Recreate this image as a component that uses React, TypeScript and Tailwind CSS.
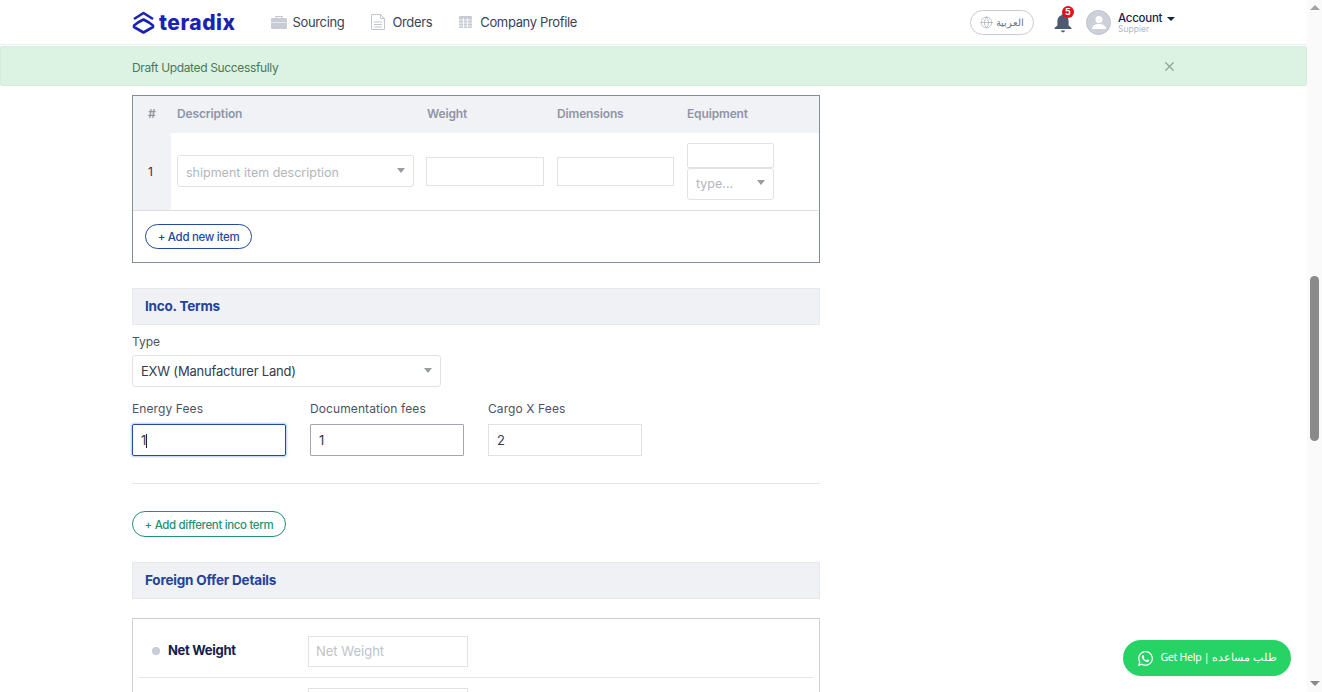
import React from 'react';
import { Globe, X } from 'lucide-react';
import { FaWhatsapp } from 'react-icons/fa';

const font = "font-['Inter','Noto_Sans',sans-serif]";

const Caret = ({ className = '' }: { className?: string }) => (
  <span className={`w-0 h-0 border-x-[4px] border-x-transparent border-t-[5px] border-t-[#9a9ca3] ${className}`} />
);

const Logo = () => (
  <div className="flex items-center gap-[4px]">
    <svg width="23" height="23" viewBox="0 0 23 23" fill="none" stroke="#1a22b5" strokeWidth="2.6" strokeLinejoin="round">
      <path d="M2 8 L11.5 2 L21 8" />
      <path d="M6 11.5 L11.5 8.5 L17 11.5 L21 14.5 V16 L11.5 21.5 L2 16 V14.5 Z" />
    </svg>
    <span className="text-[#1a22b5] text-[21px] font-extrabold tracking-[0.5px] leading-none">teradix</span>
  </div>
);

const NavLink = ({ icon, label, gap }: { icon: React.ReactNode; label: string; gap: string }) => (
  <div className={`flex items-center ${gap}`}>
    {icon}
    <span className="pt-[2px] text-[13px] tracking-[-0.35px] text-[#3a4356]">{label}</span>
  </div>
);

const Header = () => (
  <div className="h-[45px] flex items-center border-b border-[#eceef1] pl-[132px] pr-[131px]">
    <Logo />
    <div className="flex items-center ml-[35px] gap-[27px]">
      <NavLink
        gap="gap-[6px]"
        label="Sourcing"
        icon={
          <svg width="16" height="14" viewBox="0 0 16 14">
            <path d="M5 3V1.500h6V3" fill="none" stroke="#c2c6cf" strokeWidth="1.2" />
            <rect x="0" y="3" width="16" height="11" rx="1.2" fill="#c9ccd4" />
            <rect x="0" y="7" width="16" height="1" fill="#e4e6ea" />
          </svg>
        }
      />
      <NavLink
        gap="gap-[7px]"
        label="Orders"
        icon={
          <svg width="14" height="16" viewBox="0 0 14 16" fill="none" stroke="#c2c6cf">
            <path d="M.5.5h9l4 4v11H.5z" />
            <path d="M9.500.5v4h4M3 8h8M3 10.500h8M3 13h8" />
          </svg>
        }
      />
      <NavLink
        gap="gap-[8px]"
        label="Company Profile"
        icon={
          <svg width="13" height="12" viewBox="0 0 13 12">
            <rect width="13" height="12" rx="1" fill="#c6cad3" />
            <path d="M0 4h13M0 7h13M0 10h13M4.500 2v10M8.500 2v10" stroke="#fff" strokeWidth=".8" />
          </svg>
        }
      />
    </div>
    <div className="ml-auto flex items-center">
      <div className="w-[64px] h-[25px] rounded-full border border-[#c9ccd4] flex items-center justify-center gap-[3px] mt-[1px]">
        <Globe size={13} strokeWidth={1} className="text-[#8f95a3]" />
        <span className="text-[10px] text-[#6b7280] font-['Noto_Sans',sans-serif]">العربية</span>
      </div>
      <div className="relative ml-[20px] mt-[1px]">
        <svg width="18" height="20" viewBox="0 0 18 20" fill="#4c5b72">
          <path d="M9 1c.9 0 1.400.6 1.400 1.300C13 3 14.600 5.300 14.600 8v4.500L17.500 15v1H.5v-1l2.900-2.500V8C3.400 5.300 5 3 7.600 2.300 7.600 1.600 8.100 1 9 1z" />
          <path d="M7 17.500h4c0 1.100-.9 1.800-2 1.800s-2-.7-2-1.800z" />
        </svg>
        <span className="absolute -top-[7px] left-[8px] w-[12px] h-[12px] rounded-full bg-[#e8101c] text-white text-[9px] font-bold leading-[12px] text-center">5</span>
      </div>
      <div className="w-[25px] h-[25px] ml-[14px] rounded-full bg-[#cdd0da] border border-[#bfc3cf] overflow-hidden flex items-center justify-center mt-[1px]">
        <svg width="14" height="15" viewBox="0 0 14 15" fill="#fff">
          <circle cx="7" cy="4.500" r="3.500" />
          <path d="M0 14c0-3.500 3-5 7-5s7 1.500 7 5z" />
        </svg>
      </div>
      <div className="ml-[7px] flex flex-col w-[58px] mt-[2px]">
        <div className="flex items-center gap-[5px]">
          <span className="text-[11.5px] font-medium leading-[13px] tracking-[-0.25px] text-[#16224a]">Account</span>
          <span className="w-0 h-0 border-x-[4px] border-x-transparent border-t-[4px] border-t-[#16224a]" />
        </div>
        <span className="text-[8.5px] leading-[9px] text-[#b4b8c2]">Suppier</span>
      </div>
    </div>
  </div>
);

const Alert = () => (
  <div className="mt-[1px] h-[40px] flex items-center justify-between bg-[#dcf3e3] border border-[#d2ecda] rounded-[2px] pl-[131px] pr-[129px]">
    <span className="mt-[3px] text-[12px] tracking-[-0.35px] text-[#4a7a58]">Draft Updated Successfully</span>
    <X size={15} strokeWidth={2} className="text-[#8aa893]" />
  </div>
);

const SectionHead = ({ title }: { title: string }) => (
  <div className="h-[37px] bg-[#eff1f5] border border-[#e6e8ec] flex items-center pl-[12px]">
    <span className="text-[13.5px] font-bold tracking-[-0.2px] text-[#23439b]">{title}</span>
  </div>
);

const SelectBox = ({ text, className, textClass }: { text: string; className: string; textClass: string }) => (
  <div className={`bg-white border border-[#e0e2e6] rounded-[3px] flex items-center justify-between pl-[8px] pr-[8px] ${className}`}>
    <span className={textClass}>{text}</span>
    <Caret className="-mt-[2px]" />
  </div>
);

const Field = ({ label, value, border, caret }: { label: string; value: string; border: string; caret?: boolean }) => (
  <div className="w-[154px]">
    <div className="text-[12px] leading-[15px] tracking-[0.1px] text-[#4a5266]">{label}</div>
    <div className={`mt-[8px] h-[32px] flex items-center pt-[1px] pl-[8px] text-[13px] text-[#333b4d] ${border}`}>
      {value}
      {caret && <span className="w-[1px] h-[14px] bg-[#222]" />}
    </div>
  </div>
);

const ItemsTable = () => (
  <div className="border border-[#838c9b] h-[168px]">
    <div className="h-[37px] pb-[2px] bg-[#f0f2f6] flex items-center text-[12px] font-semibold tracking-[-0.15px] text-[#8f95a6]">
      <span className="w-[38px] pl-[15px]">#</span>
      <span className="w-[256px] pl-[6px]">Description</span>
      <span className="w-[130px]">Weight</span>
      <span className="w-[130px]">Dimensions</span>
      <span>Equipment</span>
    </div>
    <div className="h-[78px] flex items-center border-b border-[#dcdee2]">
      <div className="w-[38px] self-stretch bg-[#f0f2f6] flex items-center pl-[15px] text-[12px] text-[#2b3242]">1</div>
      <SelectBox
        text="shipment item description"
        className="ml-[6px] w-[237px] h-[32px] -mt-[1px]"
        textClass="text-[12.5px] text-[#b3b6bd] mt-[4px]"
      />
      <div className="ml-[12px] w-[118px] h-[29px] border border-[#e0e2e6]" />
      <div className="ml-[13px] w-[117px] h-[29px] border border-[#e0e2e6]" />
      <div className="ml-[13px] w-[87px] flex flex-col -mt-[1px]">
        <div className="h-[25px] border border-[#e0e2e6] rounded-[2px]" />
        <SelectBox text="type..." className="h-[32px]" textClass="text-[12.5px] text-[#b3b6bd] mt-[2px]" />
      </div>
    </div>
    <div className="pl-[12px] pt-[13px]">
      <div className="w-[107px] h-[25px] pt-[3px] rounded-full border border-[#1f4aa0] flex items-center justify-center text-[11.5px] font-medium tracking-[-0.3px] text-[#1f4aa0]">
        + Add new item
      </div>
    </div>
  </div>
);

const Content = () => (
  <div className="ml-[132px] w-[688px] pt-[9px]">
    <ItemsTable />
    <div className="mt-[25px]">
      <SectionHead title="Inco. Terms" />
    </div>
    <div className="mt-[9px] text-[12px] leading-[15px] text-[#4a5266]">Type</div>
    <SelectBox
      text="EXW (Manufacturer Land)"
      className="mt-[6px] w-[309px] h-[32px]"
      textClass="mt-[2px] text-[13px] tracking-[-0.2px] text-[#333b4d]"
    />
    <div className="mt-[14px] flex gap-[24px]">
      <Field label="Energy Fees" value="1" caret border="border border-[#1f4aa0] rounded-[2px] shadow-[0_0_2px_1px_#b9cdf0]" />
      <Field label="Documentation fees" value="1" border="border border-[#a3a6ac] rounded-[1px]" />
      <Field label="Cargo X Fees" value="2" border="border border-[#e0e2e6]" />
    </div>
    <div className="mt-[27px] border-t border-[#e3e5e8]" />
    <div className="mt-[27px] w-[154px] h-[26px] pt-[3px] rounded-full border border-[#1f9273] flex items-center justify-center text-[11.5px] font-medium tracking-[-0.35px] text-[#1f9273]">
      + Add different inco term
    </div>
    <div className="mt-[25px]">
      <SectionHead title="Foreign Offer Details" />
    </div>
    <div className="mt-[19px] border border-[#cfd1d4] h-[120px] px-[6px]">
      <div className="h-[59px] pt-[17px] flex items-start border-b border-[#e3e5e8]">
        <span className="ml-[13px] mt-[11px] w-[8px] h-[8px] rounded-full bg-[#c9ccd8]" />
        <span className="ml-[8px] w-[140px] h-[31px] leading-[28px] text-[13px] font-bold tracking-[-0.3px] text-[#14204a]">Net Weight</span>
        <div className="w-[160px] h-[31px] border border-[#e0e2e6] flex items-center pt-[1px] pl-[7px] text-[13px] text-[#c0c2c8]">Net Weight</div>
      </div>
      <div className="mt-[10px] ml-[169px] w-[160px] h-[31px] border border-[#e0e2e6]" />
    </div>
  </div>
);

const Scrollbar = () => (
  <div className="w-[15px] h-full bg-[#fafafa] flex flex-col items-center">
    <span className="mt-[5px] w-0 h-0 border-x-[5px] border-x-transparent border-b-[5px] border-b-[#a3a3a3]" />
    <div className="mt-[266px] w-[9px] h-[165px] rounded-full bg-[#8a8a8a]" />
    <span className="mt-auto mb-[6px] w-0 h-0 border-x-[5px] border-x-transparent border-t-[5px] border-t-[#8a8a8a]" />
  </div>
);

export default function App() {
  return (
    <div className={`relative w-[1322px] h-[692px] overflow-hidden bg-white flex ${font}`}>
      <div className="flex-1 min-w-0 h-full overflow-hidden">
        <Header />
        <Alert />
        <Content />
      </div>
      <Scrollbar />
      <div className="absolute left-[1123px] top-[640px] w-[168px] h-[36px] rounded-full bg-[#28d366] flex items-center justify-center gap-[6px] text-white">
        <FaWhatsapp size={17} />
        <span className="text-[10.5px] tracking-[-0.25px] font-['Noto_Sans',sans-serif] whitespace-nowrap">Get Help | طلب مساعده</span>
      </div>
    </div>
  );
}
